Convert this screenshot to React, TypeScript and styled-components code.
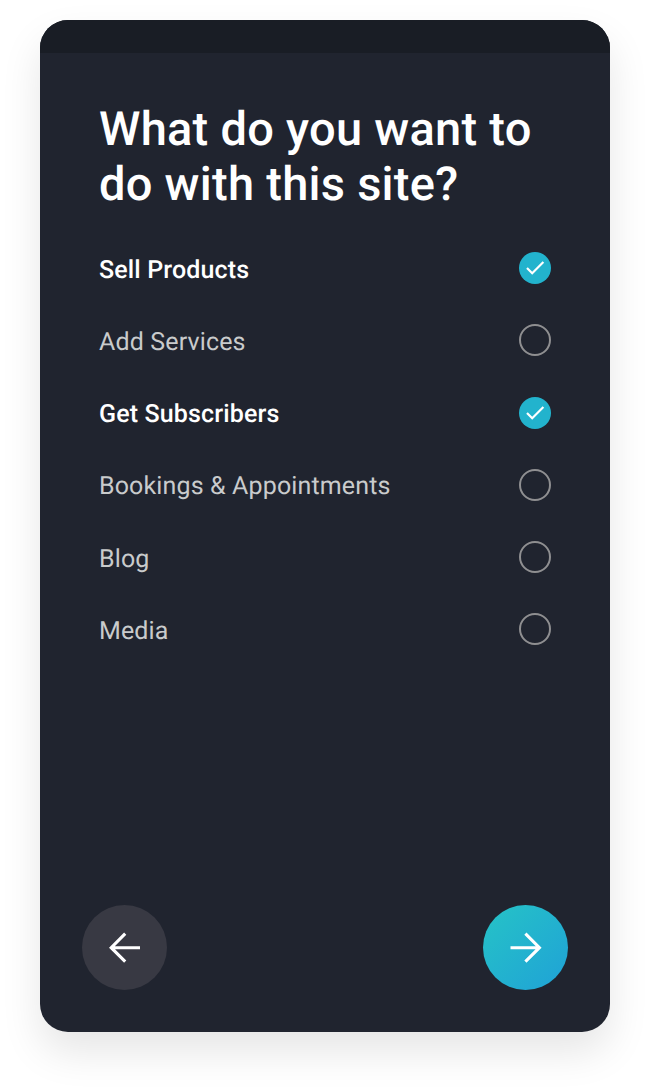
import React, { useState } from "react";
import styled, { createGlobalStyle } from "styled-components";

const GlobalStyle = createGlobalStyle`
  *, *::before, *::after { box-sizing: border-box; }
  html, body { margin: 0; background: #ffffff; }
  body {
    font-family: Roboto, "Liberation Sans", sans-serif;
    text-rendering: geometricPrecision;
  }
`;

const Page = styled.main`
  height: 1092px;
  padding: 20px 40px 60px;
  overflow: hidden;
`;

const Card = styled.section`
  display: flex;
  flex-direction: column;
  height: 1012px;
  border-radius: 28px;
  overflow: hidden;
  background: #20242f;
  box-shadow: 0 20px 40px rgba(0, 0, 0, 0.1);
`;

const StatusBar = styled.div`
  flex: none;
  height: 33px;
  background: #191d25;
`;

const Content = styled.div`
  flex: 1;
  padding: 50px 59px 0;
`;

const Title = styled.h1`
  margin: 0;
  color: #ffffff;
  font-size: 47px;
  font-weight: 500;
  line-height: 54.5px;
  letter-spacing: 0.26px;
  white-space: nowrap;
`;

const OptionList = styled.ul`
  margin: 20.2px 0 0;
  padding: 0;
  list-style: none;
`;

const Option = styled.li<{ $selected: boolean }>`
  display: flex;
  align-items: center;
  justify-content: space-between;
  height: 72.2px;
  color: ${({ $selected }) => ($selected ? "#ffffff" : "#c9cbcc")};
  font-size: 25px;
  font-weight: ${({ $selected }) => ($selected ? 500 : 400)};
  line-height: 30px;
  letter-spacing: 0.14px;
  cursor: pointer;
`;

const OptionLabel = styled.span`
  padding-top: 5.3px;
`;

const Radio = styled.span<{ $selected: boolean }>`
  display: flex;
  align-items: center;
  justify-content: center;
  width: 32px;
  height: 32px;
  border-radius: 50%;
  border: ${({ $selected }) => ($selected ? "none" : "2px solid #8f8f91")};
  background: ${({ $selected }) => ($selected ? "#22b3cd" : "transparent")};
`;

const Footer = styled.footer`
  display: flex;
  justify-content: space-between;
  padding: 0 42px 42px;
`;

const RoundButton = styled.button<{ $primary?: boolean }>`
  display: flex;
  align-items: center;
  justify-content: center;
  width: 85px;
  height: 85px;
  padding: 0;
  border: 0;
  border-radius: 50%;
  background: ${({ $primary }) =>
    $primary ? "linear-gradient(135deg, #25c0c8 10%, #20a5d5 90%)" : "#383943"};
  cursor: pointer;
`;

const ArrowIcon = styled.svg`
  display: block;
`;

const Check = () => (
  <svg width="32" height="32" viewBox="0 0 32 32" fill="none" aria-hidden="true">
    <path d="M8 16 13.2 21.2 24.4 10" stroke="#fff" strokeWidth="2.2" />
  </svg>
);

const arrowPaths = {
  left: "M33 17.7H4M18.2 3.7 4.2 17.7 18.2 31.7",
  right: "M2.5 17.7H31M17.4 3.7 31.4 17.7 17.4 31.7",
};

const Arrow = ({ direction }: { direction: keyof typeof arrowPaths }) => (
  <ArrowIcon width="35" height="35" viewBox="0 0 35 35" fill="none" aria-hidden="true">
    <path d={arrowPaths[direction]} stroke="#fff" strokeWidth="3.1" />
  </ArrowIcon>
);

const options = [
  "Sell Products",
  "Add Services",
  "Get Subscribers",
  "Bookings & Appointments",
  "Blog",
  "Media",
];

export default function App() {
  const [selected, setSelected] = useState<string[]>(["Sell Products", "Get Subscribers"]);
  const toggle = (name: string) =>
    setSelected((s) => (s.includes(name) ? s.filter((n) => n !== name) : [...s, name]));

  return (
    <>
      <GlobalStyle />
      <Page>
        <Card>
          <StatusBar />
          <Content>
            <Title>
              What do you want to
              <br />
              do with this site?
            </Title>
            <OptionList>
              {options.map((name) => {
                const on = selected.includes(name);
                return (
                  <Option key={name} $selected={on} onClick={() => toggle(name)}>
                    <OptionLabel>{name}</OptionLabel>
                    <Radio $selected={on}>{on && <Check />}</Radio>
                  </Option>
                );
              })}
            </OptionList>
          </Content>
          <Footer>
            <RoundButton aria-label="Back">
              <Arrow direction="left" />
            </RoundButton>
            <RoundButton $primary aria-label="Next">
              <Arrow direction="right" />
            </RoundButton>
          </Footer>
        </Card>
      </Page>
    </>
  );
}
